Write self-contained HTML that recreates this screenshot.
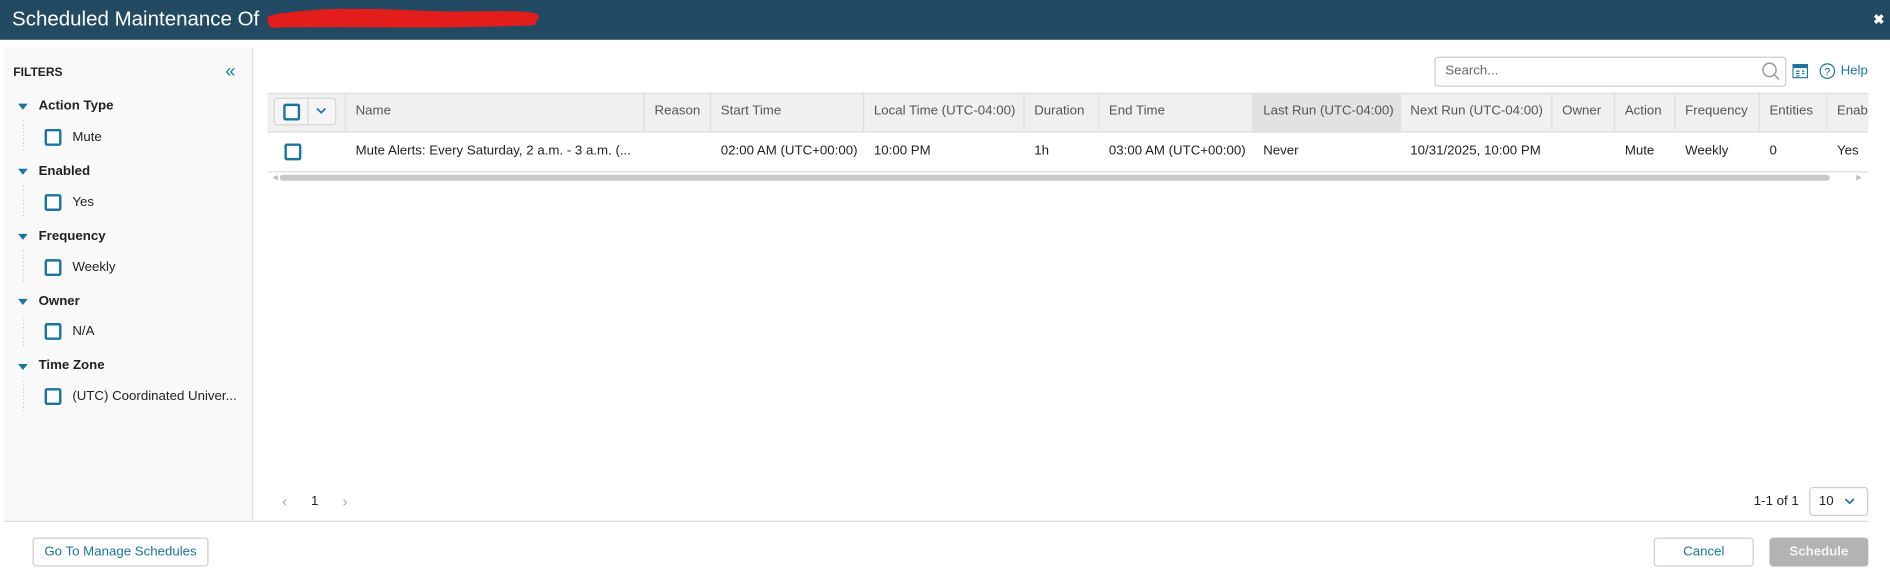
<!DOCTYPE html>
<html><head><meta charset="utf-8"><style>
html,body{margin:0;padding:0;width:1890px;height:574px;overflow:hidden;background:#fff}
#w{position:absolute;left:0;top:0;width:1568px;height:476px;transform:scale(1.20536);transform-origin:0 0;font-family:"Liberation Sans",sans-serif;font-size:11px;color:#222}
.a{position:absolute;white-space:nowrap}
.hdr{left:0;top:0;width:1568px;height:33px;background:#234a63}
.cb{position:absolute;width:10px;height:10px;border:2px solid #1a74a0;border-radius:2px;background:#fff}
.grp{font-weight:bold;font-size:11px}
.tri{width:0;height:0;border-left:4px solid transparent;border-right:4px solid transparent;border-top:5px solid #1a74a0}
.dot{width:1px;background:repeating-linear-gradient(to bottom,#ccc 0 1px,transparent 1px 3px)}
.th{position:absolute;top:77px;height:31px;line-height:31px;border-right:1px solid #ddd;color:#555;padding-left:8px;box-sizing:border-box}
.td{position:absolute;top:119px}
.btn{position:absolute;border:1px solid #ccc;border-radius:3px;box-sizing:border-box;text-align:center;color:#1a74a0}
</style></head><body><div id="w">
<div class="a hdr"></div>
<div class="a" style="left:10px;top:6px;font-size:17px;color:#fff">Scheduled Maintenance Of</div>
<svg class="a" style="left:222px;top:6px" width="226" height="20"><path d="M2 10 C40 2,90 4,130 6 S200 4,222 8 M4 14 C60 12,120 16,220 12 M10 8 L215 10" stroke="#e31c1c" stroke-width="6" fill="none" stroke-linecap="round"/></svg>
<div class="a" style="left:1554px;top:10px;color:#fff;font-size:11px;font-weight:bold">✖</div>

<div class="a" style="left:3px;top:40px;width:206px;height:392px;background:#f9f9f9;border-right:1px solid #ddd"></div>
<div class="a" style="left:11px;top:55px;font-size:10px;font-weight:bold">FILTERS</div>
<div class="a" style="left:187px;top:51px;font-size:15px;color:#1a74a0">«</div>

<div class="a tri" style="left:15px;top:86px"></div><div class="a grp" style="left:32px;top:82px">Action Type</div>
<div class="a dot" style="left:19px;top:100px;height:26px"></div><div class="cb" style="left:37px;top:107px"></div><div class="a" style="left:60px;top:108px">Mute</div>
<div class="a tri" style="left:15px;top:140px"></div><div class="a grp" style="left:32px;top:136px">Enabled</div>
<div class="a dot" style="left:19px;top:154px;height:26px"></div><div class="cb" style="left:37px;top:161px"></div><div class="a" style="left:60px;top:162px">Yes</div>
<div class="a tri" style="left:15px;top:194px"></div><div class="a grp" style="left:32px;top:190px">Frequency</div>
<div class="a dot" style="left:19px;top:208px;height:26px"></div><div class="cb" style="left:37px;top:215px"></div><div class="a" style="left:60px;top:216px">Weekly</div>
<div class="a tri" style="left:15px;top:248px"></div><div class="a grp" style="left:32px;top:244px">Owner</div>
<div class="a dot" style="left:19px;top:262px;height:26px"></div><div class="cb" style="left:37px;top:268px"></div><div class="a" style="left:60px;top:269px">N/A</div>
<div class="a tri" style="left:15px;top:302px"></div><div class="a grp" style="left:32px;top:297px">Time Zone</div>
<div class="a dot" style="left:19px;top:316px;height:26px"></div><div class="cb" style="left:37px;top:322px"></div><div class="a" style="left:60px;top:323px">(UTC) Coordinated Univer...</div>

<div class="a" style="left:1190px;top:47px;width:292px;height:25px;border:1px solid #ccc;border-radius:3px;box-sizing:border-box"></div>
<div class="a" style="left:1199px;top:53px;color:#666">Search...</div>
<svg class="a" style="left:1461px;top:51px" width="16" height="16"><circle cx="7" cy="7" r="5.5" stroke="#999" stroke-width="1.2" fill="none"/><line x1="11" y1="11" x2="15" y2="15" stroke="#999" stroke-width="1.2"/></svg>
<svg class="a" style="left:1487px;top:53px" width="13" height="12"><rect x="0.5" y="0.5" width="12" height="11" fill="#fff" stroke="#1a74a0"/><rect x="0.5" y="0.5" width="12" height="3" fill="#1a74a0"/><path d="M3 6h3M3 8h3M3 10h3M8 6h2M8 8h2" stroke="#1a74a0"/></svg>
<svg class="a" style="left:1509px;top:52px" width="14" height="14"><circle cx="7" cy="7" r="6" fill="none" stroke="#1a74a0"/><text x="7" y="10.5" font-size="9" text-anchor="middle" fill="#1a74a0" font-family="Liberation Sans">?</text></svg>
<div class="a" style="left:1527px;top:53px;color:#1a74a0">Help</div>

<div class="a" style="left:222px;top:77px;width:1328px;height:31px;background:#f0f0f0;border-top:1px solid #ddd;border-bottom:1px solid #ddd"></div>
<div class="a" style="left:1040px;top:78px;width:122px;height:31px;background:#e2e2e2"></div>
<div class="a" style="left:227px;top:81px;width:52px;height:23px;border:1px solid #d5d5d5;border-radius:3px;box-sizing:border-box;background:#f5f5f5"></div>
<div class="a" style="left:255px;top:81px;width:1px;height:23px;background:#d5d5d5"></div>
<div class="cb" style="left:235px;top:86px"></div>
<svg class="a" style="left:262px;top:89px" width="9" height="6"><path d="M1 1l3.5 3.5L8 1" stroke="#1a74a0" stroke-width="1.4" fill="none"/></svg>
<div class="th" style="left:222px;width:65px"></div>
<div class="th" style="left:287px;width:248px">Name</div>
<div class="th" style="left:535px;width:55px">Reason</div>
<div class="th" style="left:590px;width:127px">Start Time</div>
<div class="th" style="left:717px;width:133px">Local Time (UTC-04:00)</div>
<div class="th" style="left:850px;width:62px">Duration</div>
<div class="th" style="left:912px;width:128px">End Time</div>
<div class="th" style="left:1040px;width:122px">Last Run (UTC-04:00)</div>
<div class="th" style="left:1162px;width:126px">Next Run (UTC-04:00)</div>
<div class="th" style="left:1288px;width:52px">Owner</div>
<div class="th" style="left:1340px;width:50px">Action</div>
<div class="th" style="left:1390px;width:70px">Frequency</div>
<div class="th" style="left:1460px;width:56px">Entities</div>
<div class="th" style="left:1516px;width:34px;overflow:hidden;border-right:0">Enabled</div>

<div class="cb" style="left:236px;top:119px"></div>
<div class="td" style="left:295px">Mute Alerts: Every Saturday, 2 a.m. - 3 a.m. (...</div>
<div class="td" style="left:598px">02:00 AM (UTC+00:00)</div>
<div class="td" style="left:725px">10:00 PM</div>
<div class="td" style="left:858px">1h</div>
<div class="td" style="left:920px">03:00 AM (UTC+00:00)</div>
<div class="td" style="left:1048px">Never</div>
<div class="td" style="left:1170px">10/31/2025, 10:00 PM</div>
<div class="td" style="left:1348px">Mute</div>
<div class="td" style="left:1398px">Weekly</div>
<div class="td" style="left:1468px">0</div>
<div class="td" style="left:1524px">Yes</div>
<div class="a" style="left:222px;top:142px;width:1328px;height:1px;background:#ddd"></div>
<div class="a" style="left:232px;top:145px;width:1286px;height:5px;border-radius:3px;background:#c8c8c8"></div>
<div class="a" style="left:226px;top:144px;font-size:6px;color:#bbb">◀</div>
<div class="a" style="left:1540px;top:144px;font-size:6px;color:#bbb">▶</div>

<div class="a" style="left:234px;top:408px;color:#aaa;font-size:13px">‹</div>
<div class="a" style="left:258px;top:410px">1</div>
<div class="a" style="left:284px;top:408px;color:#aaa;font-size:13px">›</div>
<div class="a" style="left:1455px;top:410px">1-1 of 1</div>
<div class="a" style="left:1501px;top:404px;width:49px;height:24px;border:1px solid #ccc;border-radius:3px;box-sizing:border-box"></div>
<div class="a" style="left:1509px;top:410px">10</div>
<svg class="a" style="left:1530px;top:413px" width="9" height="6"><path d="M1 1l3.5 3.5L8 1" stroke="#1a74a0" stroke-width="1.4" fill="none"/></svg>

<div class="a" style="left:3px;top:432px;width:1547px;height:1px;background:#ddd"></div>
<div class="btn" style="left:27px;top:446px;width:146px;height:24px;line-height:22px">Go To Manage Schedules</div>
<div class="btn" style="left:1372px;top:446px;width:83px;height:24px;line-height:22px">Cancel</div>
<div class="btn" style="left:1468px;top:446px;width:82px;height:24px;line-height:24px;background:#b3b3b3;border:0;color:#f4f4f4;font-weight:bold">Schedule</div>
</div></body></html>
